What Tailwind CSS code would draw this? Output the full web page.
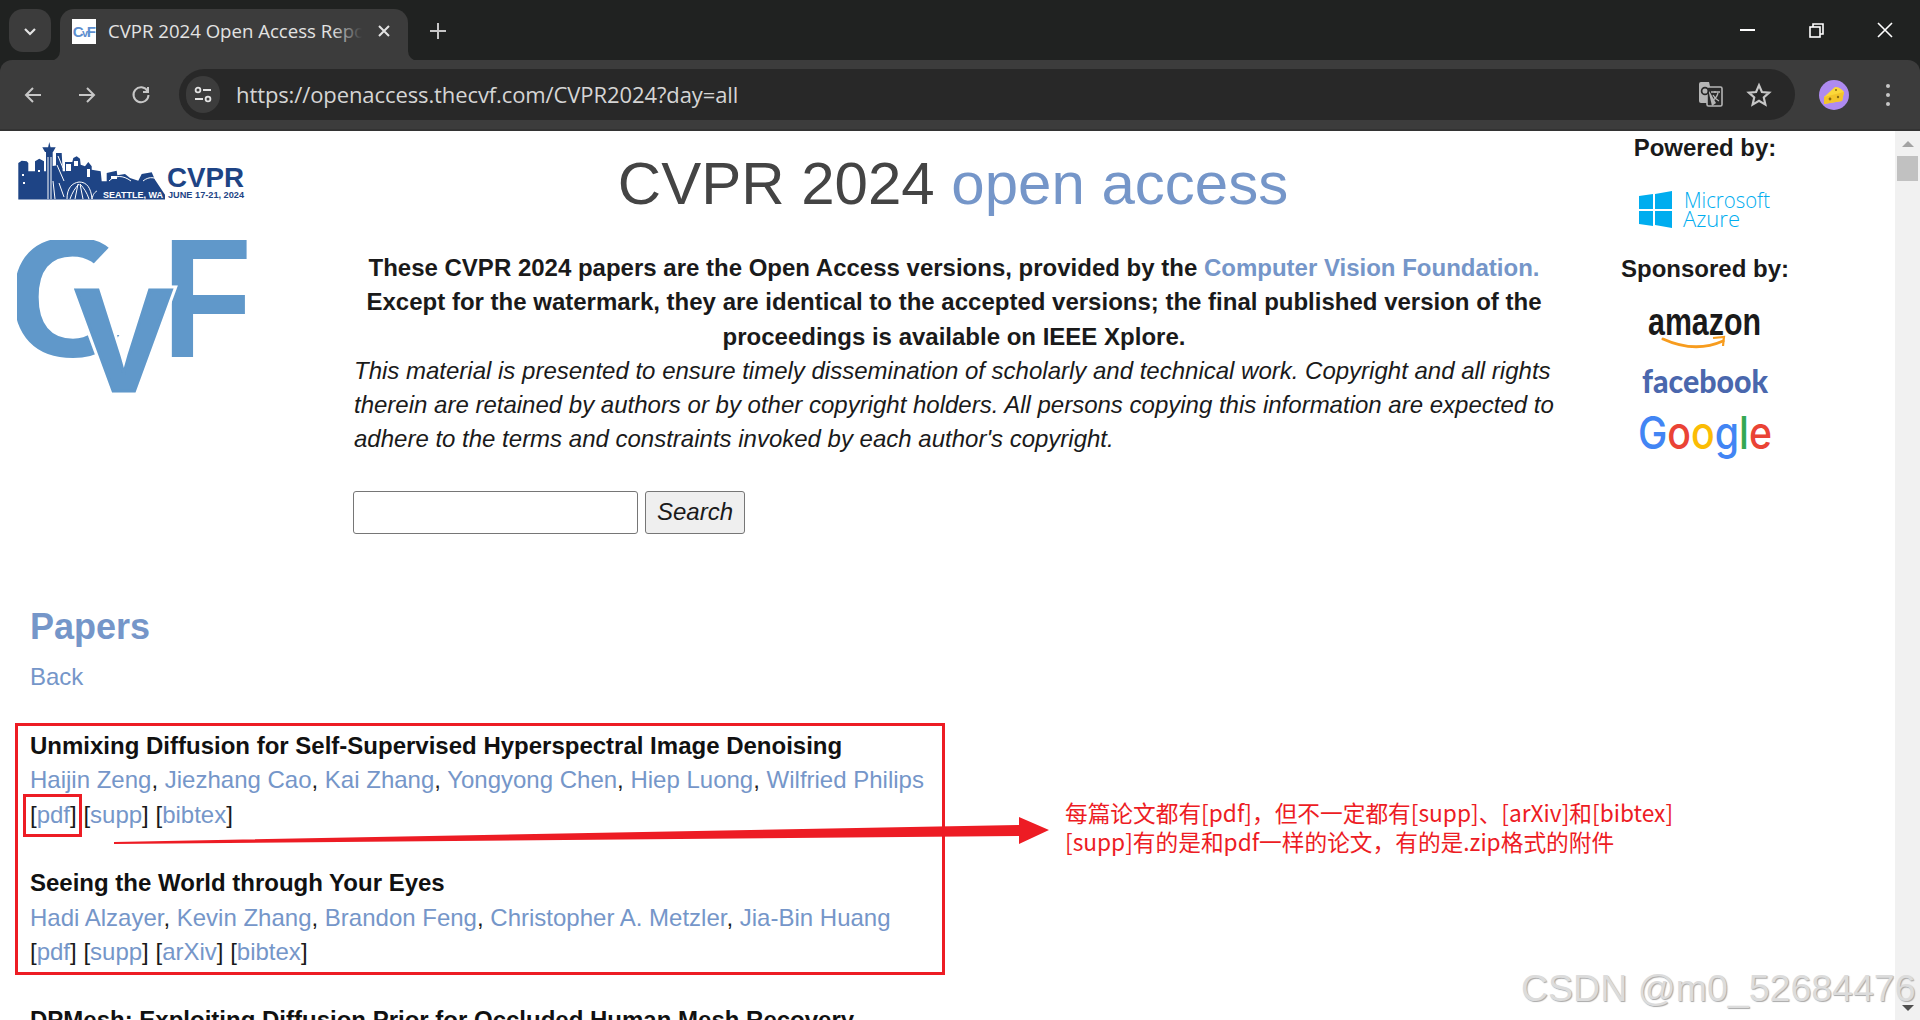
<!DOCTYPE html>
<html lang="en">
<head>
  <meta charset="UTF-8" />
  <title>CVPR 2024 Open Access Repository</title>
  <script src="https://cdn.jsdelivr.net/npm/@tailwindcss/browser@4"></script>
</head>
<body class="w-[1920px] h-[1020px] overflow-hidden bg-white relative font-['Liberation_Sans',Arial,sans-serif] text-[#1a1a1a]">

  <!-- browser chrome -->
  <div class="h-[131px] bg-[#202221] flex flex-col">
    <div class="h-[60px] shrink-0 flex items-start pt-[9px] pl-[9px] text-[#e3e3e3]">
      <div class="w-[42px] h-[43px] rounded-[14px] bg-[#3c3c3c] flex items-center justify-center">
        <svg width="16" height="16" viewBox="0 0 16 16" fill="none" stroke="#e3e3e3" stroke-width="2.2"><path d="M3 6l5 5 5-5"/></svg>
      </div>
      <div class="relative ml-[9px] w-[348px] h-[52px] rounded-t-[14px] bg-[#3c3c3c] flex items-center pl-[12px] pb-[8px]">
        <svg class="absolute left-[-10px] bottom-0" width="10" height="10" viewBox="0 0 10 10"><path d="M10 0v10H0A10 10 0 0 0 10 0z" fill="#3c3c3c"/></svg>
        <svg class="absolute right-[-10px] bottom-0" width="10" height="10" viewBox="0 0 10 10"><path d="M0 0v10h10A10 10 0 0 1 0 0z" fill="#3c3c3c"/></svg>
        <div class="w-[24px] h-[25px] bg-white flex items-center justify-center shrink-0 overflow-hidden">
          <span class="text-[15px] leading-none font-bold tracking-[-1.5px] text-[#5e8fcf] pr-[1px]">C<span class="text-[11px]">v</span>F</span>
        </div>
        <div class="relative ml-[12px] w-[254px] overflow-hidden whitespace-nowrap font-['Open_Sans',sans-serif] text-[18.6px] text-[#e3e3e3]">
          CVPR 2024 Open Access Repository
          <span class="absolute right-0 top-0 bottom-0 w-[30px] bg-gradient-to-r from-transparent to-[#3c3c3c]"></span>
        </div>
        <svg class="ml-[15px]" width="14" height="14" viewBox="0 0 14 14" stroke="#e3e3e3" stroke-width="2"><path d="M2 2l10 10M12 2L2 12"/></svg>
      </div>
      <svg class="ml-[22px] mt-[14px]" width="16" height="16" viewBox="0 0 16 16" stroke="#c7c7c7" stroke-width="2"><path d="M8 0v16M0 8h16"/></svg>
      <div class="ml-auto flex items-center pt-[13px] pr-[27px]">
        <svg width="15" height="15" viewBox="0 0 15 15" stroke="#fff" stroke-width="2"><path d="M0 7h15"/></svg>
        <svg class="ml-[54px]" width="15" height="15" viewBox="0 0 15 15" fill="none" stroke="#fff" stroke-width="1.6"><rect x="1" y="4" width="10" height="10"/><path d="M4 4V1h10v10h-3"/></svg>
        <svg class="ml-[53px]" width="16" height="16" viewBox="0 0 16 16" stroke="#fff" stroke-width="1.6"><path d="M1 1l14 14M15 1L1 15"/></svg>
      </div>
    </div>
    <div class="flex-1 bg-[#3c3c3c] rounded-t-[12px] border-b-2 border-[#333] flex items-center pl-[24px] relative">
      <svg width="18" height="18" viewBox="0 0 18 18" fill="none" stroke="#c7c7c7" stroke-width="2"><path d="M17 9H2M9 2L2 9l7 7"/></svg>
      <svg class="ml-[36px]" width="18" height="18" viewBox="0 0 18 18" fill="none" stroke="#c7c7c7" stroke-width="2"><path d="M1 9h15M9 2l7 7-7 7"/></svg>
      <svg class="ml-[35px]" width="20" height="20" viewBox="0 0 20 20" fill="none" stroke="#c7c7c7" stroke-width="2"><path d="M16.5 6A7.5 7.5 0 1 0 17.5 10"/><path d="M17 2v5h-5" /></svg>
      <div class="ml-[28px] w-[1616px] h-[51px] rounded-full bg-[#282828] flex items-center pl-[7px] pr-[23px]">
        <div class="w-[34px] h-[37px] rounded-full bg-[#3c3c3c] flex items-center justify-center">
          <svg width="20" height="18" viewBox="0 0 20 18" fill="none" stroke="#e3e3e3" stroke-width="1.8"><circle cx="5" cy="4" r="2.4"/><path d="M10 4h8M2 13h8"/><circle cx="15" cy="13" r="2.4"/></svg>
        </div>
        <span class="ml-[16px] font-['Open_Sans',sans-serif] text-[22px] text-[#d5d5d5] tracking-[-0.1px]">https://openaccess.thecvf.com/CVPR2024?day=all</span>
        <svg class="ml-auto" width="26" height="26" viewBox="0 0 26 26">
          <path d="M1 2a2 2 0 0 1 2-2h8l5 21H3a2 2 0 0 1-2-2z" fill="#b5b5b5"/>
          <rect x="9" y="5" width="15" height="19" rx="1.5" fill="#282828" stroke="#b5b5b5" stroke-width="1.6"/>
          <path d="M10 7l4 17 4-3z" fill="#b5b5b5"/>
          <path d="M13 10h9M17 9v2M20 11c-1 4-3 6-6 8M15 13c1 2 4 5 6 6" fill="none" stroke="#b5b5b5" stroke-width="1.3"/>
          <circle cx="7" cy="9" r="3.4" fill="none" stroke="#282828" stroke-width="1.7"/>
        </svg>
        <svg class="ml-[22px]" width="26" height="26" viewBox="0 0 24 24" fill="none" stroke="#c7c7c7" stroke-width="2" stroke-linejoin="miter"><path d="M12 3l2.7 6.2 6.7.6-5 4.5 1.5 6.6-5.9-3.5-5.9 3.5 1.5-6.6-5-4.5 6.7-.6z"/></svg>
      </div>
      <div class="relative ml-[24px] w-[30px] h-[30px] rounded-full bg-[#ae8af0] overflow-hidden">
        <svg width="30" height="30" viewBox="0 0 30 30">
          <path d="M5 17l11-10c4 0 7 2 9 5l-2 9-18 3z" fill="#fbd83a"/>
          <path d="M5 17l20-5-2 9-18 3z" fill="#f3c52a"/>
          <circle cx="11" cy="19" r="1.4" fill="#8a6a10"/><circle cx="19" cy="17" r="1.2" fill="#8a6a10"/><circle cx="17" cy="10" r="1" fill="#8a6a10"/>
        </svg>
      </div>
      <div class="ml-[37px] flex flex-col gap-[5px]">
        <span class="w-[4px] h-[4px] rounded-full bg-[#c7c7c7]"></span>
        <span class="w-[4px] h-[4px] rounded-full bg-[#c7c7c7]"></span>
        <span class="w-[4px] h-[4px] rounded-full bg-[#c7c7c7]"></span>
      </div>
    </div>
  </div>

  <!-- page + scrollbar -->
  <div class="flex h-[889px]">
    <main class="w-[1895px] overflow-hidden">
      <div class="flex">
        <!-- left logos -->
        <div class="w-[354px] shrink-0 pl-[17px] pt-[12px]">
          <svg width="229" height="58" viewBox="0 0 229 58" class="block overflow-visible">
            <path fill="#1e4485" d="M1.3 56.5V20l3.4-2.3 5 .6 1.6 1.7v8.3H18v-10l4.3-2.6 4.7 2.6v10h2V9h6.7v14l3.3-.5V10h5.7l1 18.3H48V19h7.3l1-4 3.4-1.7 3.3 2.4.7 6 4.3 1.6 3.3-4.3 3.4 4.3v3.4l9 1.6 1 10h5V30l10-2.3.6 4.6 7.7-1.3 5 4 8.3 2.7 3.4-6.7 10-1.7 3.3 7.4 10 15v4.8z"/>
            <path fill="#1e4485" d="M32.3-1l1.2 5.3h5.2L36 9h-8l-2.7-4.7h5.8z"/>
            <g fill="none" stroke="#fff" stroke-width="1">
              <path d="M31 56V14M34 56V14M38 56l-2-18M41 13l5 12M40 22l7 16M42 40l5 14"/>
              <path d="M50 56c0-11 5-16 12-17 8 0 12 6 13 17M53 56c2-6 5-11 9-15M58 56l3-15M66 56l-3-15M72 56c-2-6-5-11-9-15"/>
              <path d="M75 56c1-5 3-7 5-8"/>
              <path d="M92 38c6-6 14-6 22 0M126 38c6-5 14-5 20 4"/>
            </g>
            <g fill="#fff"><rect x="49" y="21" width="5" height="7"/><rect x="57" y="18" width="4" height="5"/><rect x="70" y="26" width="3" height="8"/><rect x="5" y="31" width="2" height="2"/><rect x="6" y="39" width="2" height="2"/><rect x="21" y="27" width="2" height="2"/><rect x="94" y="33" width="6" height="3"/></g>
            <text x="86" y="54.5" font-family="Liberation Sans" font-weight="700" font-size="9" fill="#fff" textLength="60" lengthAdjust="spacing">SEATTLE, WA</text>
            <text x="150" y="44" font-family="Liberation Sans" font-weight="700" font-size="28" fill="#1e4485" textLength="77" lengthAdjust="spacingAndGlyphs">CVPR</text>
            <text x="151" y="55" font-family="Liberation Sans" font-weight="700" font-size="9.6" fill="#1e4485" textLength="76" lengthAdjust="spacingAndGlyphs">JUNE 17-21, 2024</text>
          </svg>
          <svg width="232" height="156" viewBox="0 0 232 156" class="block mt-[39px]">
            <g font-family="Liberation Sans" font-weight="700">
              <text x="-10" y="116" font-size="170" fill="#6098ca">C</text>
              <path d="M101-2L60 41v54h90V-2z" fill="#fff"/>
              <text x="145" y="117" font-size="170" fill="#6098ca" textLength="90" lengthAdjust="spacingAndGlyphs">F</text>
              <text x="58" y="150.5" font-size="146" fill="#fff" stroke="#fff" stroke-width="9" stroke-linejoin="miter">V</text>
              <text x="58" y="150.5" font-size="146" fill="#6098ca" stroke="#6098ca" stroke-width="3" stroke-linejoin="miter">V</text>
            </g>
          </svg>
        </div>

        <!-- center -->
        <div class="w-[1200px] shrink-0 pt-[17px]">
          <h1 class="text-center text-[60px] leading-[72px] text-[#444] pr-[2px]">CVPR 2024 <span class="text-[#7596c9]">open access</span></h1>
          <div class="mt-[31px] text-[24px] leading-[34.3px]">
            <p class="text-center font-bold">These CVPR 2024 papers are the Open Access versions, provided by the <a class="text-[#7596c9]">Computer Vision Foundation.</a><br>Except for the watermark, they are identical to the accepted versions; the final published version of the proceedings is available on IEEE Xplore.</p>
            <p class="italic">This material is presented to ensure timely dissemination of scholarly and technical work. Copyright and all rights therein are retained by authors or by other copyright holders. All persons copying this information are expected to adhere to the terms and constraints invoked by each author's copyright.</p>
          </div>
          <form class="mt-[34px] -ml-[1px] flex gap-[7px]">
            <input class="w-[285px] h-[43px] bg-white border border-[#767676] rounded-[3px]" />
            <button type="button" class="w-[100px] h-[43px] bg-[#efefef] border border-[#767676] rounded-[3px] italic text-[24px]">Search</button>
          </form>
        </div>

        <!-- sponsors -->
        <div class="w-[302px] shrink-0 flex flex-col items-center pt-[3px]">
          <p class="font-bold text-[24px] leading-[28px]">Powered by:</p>
          <svg width="136" height="40" viewBox="0 0 136 40" class="mt-[28px] ml-[1px]">
            <path fill="#00adef" d="M1 6l14-2v15H1zM17 4l17-3v18H17zM1 21h14v15L1 34zM17 21h17v17l-17-3z"/>
            <g font-family="Open Sans" font-weight="300" font-size="22" fill="#00adef">
              <text x="46" y="18" textLength="86" lengthAdjust="spacingAndGlyphs">Microsoft</text>
              <text x="45" y="37">Azure</text>
            </g>
          </svg>
          <p class="mt-[25px] font-bold text-[24px] leading-[28px]">Sponsored by:</p>
          <svg width="118" height="56" viewBox="0 0 118 56" class="mt-[13px]">
            <text x="2" y="39" font-family="Liberation Sans" font-weight="700" font-size="38" fill="#1a1a1a" textLength="113" lengthAdjust="spacingAndGlyphs">amazon</text>
            <path d="M17 43c22 10 42 10 60 2" fill="none" stroke="#f79c1e" stroke-width="3" stroke-linecap="round"/>
            <path d="M67 42l11-1-1 9" fill="none" stroke="#f79c1e" stroke-width="2.2"/>
          </svg>
          <svg width="130" height="32" viewBox="0 0 130 32" class="mt-[14px]">
            <text x="2" y="27" font-family="Lato" font-weight="900" font-size="33" fill="#4a67ad" textLength="126" lengthAdjust="spacingAndGlyphs">facebook</text>
          </svg>
          <svg width="140" height="50" viewBox="0 0 140 50" class="mt-[15px]">
            <text x="3" y="36" font-family="Inter" font-weight="500" font-size="45" textLength="134" lengthAdjust="spacingAndGlyphs"><tspan fill="#4285f4">G</tspan><tspan fill="#ea4335">o</tspan><tspan fill="#fbbc05">o</tspan><tspan fill="#4285f4">g</tspan><tspan fill="#34a853">l</tspan><tspan fill="#ea4335">e</tspan></text>
          </svg>
        </div>
      </div>

      <!-- papers -->
      <section class="pl-[30px] mt-[71px] text-[24px] leading-[34.3px] text-[#7596c9]">
        <h2 class="font-bold text-[36px] leading-[44px]">Papers</h2>
        <a class="block mt-[11px]">Back</a>
        <dl class="mt-[35px]">
          <dt class="font-bold text-[#111]">Unmixing Diffusion for Self-Supervised Hyperspectral Image Denoising</dt>
          <dd>Haijin Zeng<span class="text-[#1a1a1a]">, </span>Jiezhang Cao<span class="text-[#1a1a1a]">, </span>Kai Zhang<span class="text-[#1a1a1a]">, </span>Yongyong Chen<span class="text-[#1a1a1a]">, </span>Hiep Luong<span class="text-[#1a1a1a]">, </span>Wilfried Philips</dd>
          <dd class="mb-[34.3px]"><span class="text-[#1a1a1a]">[</span>pdf<span class="text-[#1a1a1a]">] [</span>supp<span class="text-[#1a1a1a]">] [</span>bibtex<span class="text-[#1a1a1a]">]</span></dd>
          <dt class="font-bold text-[#111]">Seeing the World through Your Eyes</dt>
          <dd>Hadi Alzayer<span class="text-[#1a1a1a]">, </span>Kevin Zhang<span class="text-[#1a1a1a]">, </span>Brandon Feng<span class="text-[#1a1a1a]">, </span>Christopher A. Metzler<span class="text-[#1a1a1a]">, </span>Jia-Bin Huang</dd>
          <dd class="mb-[34.3px]"><span class="text-[#1a1a1a]">[</span>pdf<span class="text-[#1a1a1a]">] [</span>supp<span class="text-[#1a1a1a]">] [</span>arXiv<span class="text-[#1a1a1a]">] [</span>bibtex<span class="text-[#1a1a1a]">]</span></dd>
          <dt class="font-bold text-[#111]">DPMesh: Exploiting Diffusion Prior for Occluded Human Mesh Recovery</dt>
        </dl>
      </section>
    </main>

    <!-- scrollbar -->
    <div class="w-[25px] bg-[#f1f1f1] flex flex-col items-center pt-[9px] pb-[8px]">
      <svg width="16" height="8" viewBox="0 0 16 8"><path d="M8 1l6 6H2z" fill="#a3a3a3"/></svg>
      <div class="mt-[8px] w-[21px] h-[25px] bg-[#c1c1c1]"></div>
      <svg class="mt-auto" width="16" height="8" viewBox="0 0 16 8"><path d="M2 1h12L8 7z" fill="#505050"/></svg>
    </div>
  </div>

  <!-- annotations drawn over the screenshot -->
  <div class="absolute left-[15px] top-[723px] w-[930px] h-[252px] border-[3px] border-[#ed1c24]"></div>
  <div class="absolute left-[23px] top-[794px] w-[59px] h-[43px] border-[3px] border-[#ed1c24]"></div>
  <svg class="absolute left-[110px] top-[810px]" width="945" height="40" viewBox="0 0 945 40">
    <path d="M4 32L909 15V7l30 13-30 14v-8L4 34z" fill="#ed1c24"/>
  </svg>
  <div class="absolute left-[1065px] top-[798px] font-['Noto_Sans_CJK_SC','Liberation_Sans',sans-serif] text-[22.7px] leading-[29px] text-[#ed1c24] whitespace-nowrap">
    每篇论文都有[pdf]，但不一定都有[supp]、[arXiv]和[bibtex]<br>[supp]有的是和pdf一样的论文，有的是.zip格式的附件
  </div>
  <div class="absolute left-[1521px] top-[966px] text-[37.5px] leading-[44px] text-[#dcdcdc] whitespace-nowrap [text-shadow:1px_1px_1px_#a8a8a8]">CSDN @m0_52684476</div>
</body>
</html>
